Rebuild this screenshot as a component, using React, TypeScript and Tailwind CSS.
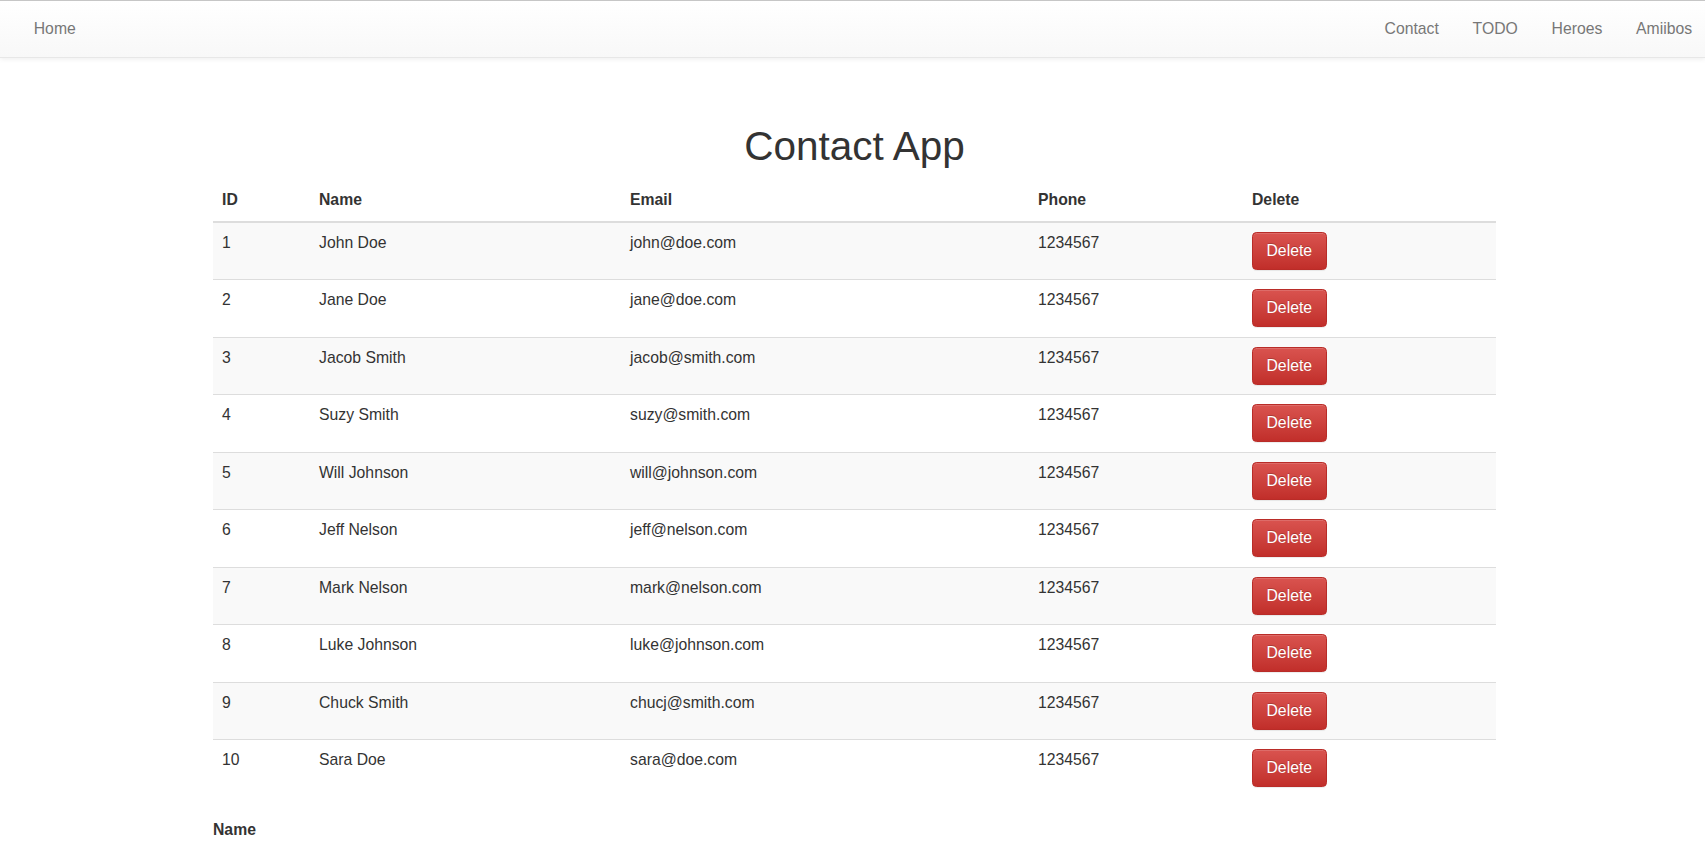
const contacts = [
  { id: 1, name: 'John Doe', email: 'john@doe.com', phone: '1234567' },
  { id: 2, name: 'Jane Doe', email: 'jane@doe.com', phone: '1234567' },
  { id: 3, name: 'Jacob Smith', email: 'jacob@smith.com', phone: '1234567' },
  { id: 4, name: 'Suzy Smith', email: 'suzy@smith.com', phone: '1234567' },
  { id: 5, name: 'Will Johnson', email: 'will@johnson.com', phone: '1234567' },
  { id: 6, name: 'Jeff Nelson', email: 'jeff@nelson.com', phone: '1234567' },
  { id: 7, name: 'Mark Nelson', email: 'mark@nelson.com', phone: '1234567' },
  { id: 8, name: 'Luke Johnson', email: 'luke@johnson.com', phone: '1234567' },
  { id: 9, name: 'Chuck Smith', email: 'chucj@smith.com', phone: '1234567' },
  { id: 10, name: 'Sara Doe', email: 'sara@doe.com', phone: '1234567' },
];

const navLinks = ['Contact', 'TODO', 'Heroes', 'Amiibos'];

function NavLink({ label }: { label: string }) {
  return (
    <a
      href="#"
      className="block px-[16.875px] py-[16.875px] leading-[22.5px] text-[#777] hover:text-[#333]"
    >
      {label}
    </a>
  );
}

function DeleteButton() {
  return (
    <button
      type="button"
      className="rounded-[4.5px] border border-[#b92c28] bg-gradient-to-b from-[#d9534f] to-[#c12e2a] px-[13.5px] py-[6.75px] leading-[22.5px] text-white [text-shadow:0_-1px_0_rgba(0,0,0,0.2)] shadow-[inset_0_1px_0_rgba(255,255,255,0.15),0_1px_1px_rgba(0,0,0,0.075)]"
    >
      Delete
    </button>
  );
}

export default function App() {
  return (
    <div className="min-h-screen bg-white font-['Liberation_Sans',Arial,sans-serif] text-[15.75px] leading-[22.5px] text-[#333]">
      {/* Navbar */}
      <nav className="border-t border-b border-t-[#c6c6c6] border-b-[#e7e7e7] bg-gradient-to-b from-white to-[#f8f8f8] shadow-[0_1px_5px_rgba(0,0,0,0.075)]">
        <div className="flex items-center justify-between px-[16.875px]">
          <NavLink label="Home" />
          <div className="-mr-[20.875px] flex">
            {navLinks.map((l) => (
              <NavLink key={l} label={l} />
            ))}
          </div>
        </div>
      </nav>

      {/* Content */}
      <div className="ml-[213px] w-[1283px] pt-[66px]">
        <h1 className="mb-[11.25px] text-center text-[40.5px] font-normal leading-[44.5px]">
          Contact App
        </h1>

        <table className="mb-[22.5px] w-full table-fixed border-collapse">
          <thead>
            <tr>
              <th className="w-[97px] border-b-2 border-[#ddd] p-[9px] text-left font-bold">ID</th>
              <th className="w-[311px] border-b-2 border-[#ddd] p-[9px] text-left font-bold">Name</th>
              <th className="w-[408px] border-b-2 border-[#ddd] p-[9px] text-left font-bold">Email</th>
              <th className="w-[214px] border-b-2 border-[#ddd] p-[9px] text-left font-bold">Phone</th>
              <th className="border-b-2 border-[#ddd] p-[9px] text-left font-bold">Delete</th>
            </tr>
          </thead>
          <tbody>
            {contacts.map((c, i) => (
              <tr
                key={c.id}
                className={`${i > 0 ? 'border-t border-[#ddd]' : ''} ${i % 2 === 0 ? 'bg-[#f9f9f9]' : 'bg-white'}`}
              >
                <td className="px-[9px] py-[9.25px] align-top">{c.id}</td>
                <td className="px-[9px] py-[9.25px] align-top">{c.name}</td>
                <td className="px-[9px] py-[9.25px] align-top">{c.email}</td>
                <td className="px-[9px] py-[9.25px] align-top">{c.phone}</td>
                <td className="px-[9px] py-[9.25px] align-top">
                  <DeleteButton />
                </td>
              </tr>
            ))}
          </tbody>
        </table>

        {/* Add contact form */}
        <form className="pb-10">
          <div className="mb-[16.875px]">
            <label className="mb-[5.6px] block font-bold">Name</label>
            <input
              type="text"
              className="block h-[38.25px] w-full rounded-[4.5px] border border-[#ccc] px-[13.5px] py-[6.75px] shadow-[inset_0_1px_1px_rgba(0,0,0,0.075)]"
            />
          </div>
        </form>
      </div>
    </div>
  );
}
